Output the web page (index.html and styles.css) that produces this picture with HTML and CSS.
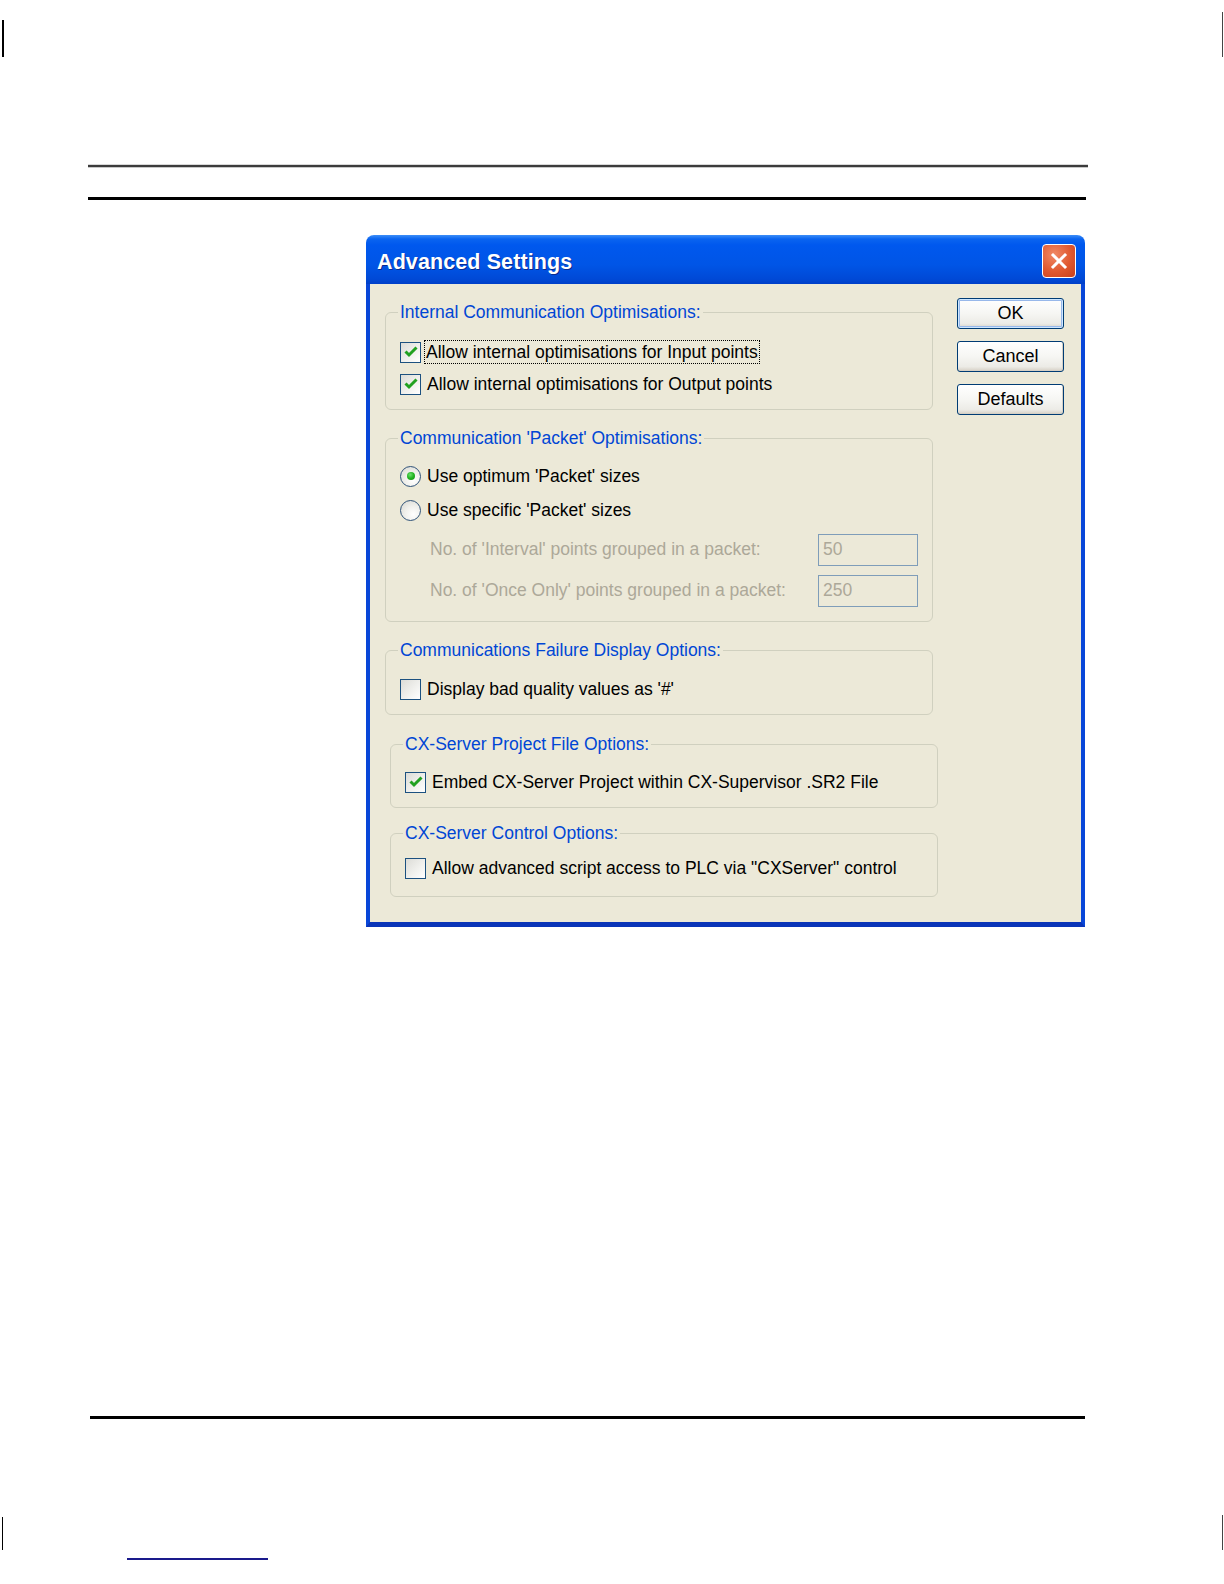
FILE: index.html
```html
<!DOCTYPE html>
<html>
<head>
<meta charset="utf-8">
<title>Advanced Settings</title>
<link rel="stylesheet" href="styles.css">
</head>
<body>
<div class="page">
  <div class="marks marks-top">
    <span class="mark mark-tl"></span>
    <span class="mark mark-tr"></span>
  </div>
  <div class="rule-thin"></div>
  <div class="rule-thick"></div>

  <div class="dialog">
    <div class="titlebar">
      <span class="title">Advanced Settings</span>
      <span class="close">
        <svg width="20" height="20" viewBox="0 0 20 20"><path d="M4 4 L16 16 M16 4 L4 16" stroke="#fff" stroke-width="3" stroke-linecap="square" fill="none"/></svg>
      </span>
    </div>
    <div class="body">
      <div class="groups">
        <fieldset class="group g1">
          <legend>Internal Communication Optimisations:</legend>
          <div class="row"><span class="check on"><svg width="18" height="18" viewBox="0 0 18 18"><path d="M3.5 8.5 L7 12 L14.5 4.5" stroke="#21a121" stroke-width="3" fill="none"/></svg></span><span class="label focus">Allow internal optimisations for Input points</span></div>
          <div class="row"><span class="check on"><svg width="18" height="18" viewBox="0 0 18 18"><path d="M3.5 8.5 L7 12 L14.5 4.5" stroke="#21a121" stroke-width="3" fill="none"/></svg></span><span class="label">Allow internal optimisations for Output points</span></div>
        </fieldset>

        <fieldset class="group g2">
          <legend>Communication 'Packet' Optimisations:</legend>
          <div class="row rrow"><span class="radio on"><span class="dot"></span></span><span class="label">Use optimum 'Packet' sizes</span></div>
          <div class="row rrow"><span class="radio"></span><span class="label">Use specific 'Packet' sizes</span></div>
          <div class="field first"><span class="flabel">No. of 'Interval' points grouped in a packet:</span><span class="input">50</span></div>
          <div class="field"><span class="flabel">No. of 'Once Only' points grouped in a packet:</span><span class="input">250</span></div>
        </fieldset>

        <fieldset class="group g3">
          <legend>Communications Failure Display Options:</legend>
          <div class="row"><span class="check"></span><span class="label">Display bad quality values as '#'</span></div>
        </fieldset>

        <fieldset class="group g4 shifted">
          <legend>CX-Server Project File Options:</legend>
          <div class="row"><span class="check on"><svg width="18" height="18" viewBox="0 0 18 18"><path d="M3.5 8.5 L7 12 L14.5 4.5" stroke="#21a121" stroke-width="3" fill="none"/></svg></span><span class="label">Embed CX-Server Project within CX-Supervisor .SR2 File</span></div>
        </fieldset>

        <fieldset class="group g5 shifted">
          <legend>CX-Server Control Options:</legend>
          <div class="row"><span class="check"></span><span class="label">Allow advanced script access to PLC via "CXServer" control</span></div>
        </fieldset>
      </div>
      <div class="buttons">
        <button class="btn default">OK</button>
        <button class="btn">Cancel</button>
        <button class="btn">Defaults</button>
      </div>
    </div>
  </div>

  <div class="rule-bottom"></div>
  <div class="marks marks-bottom">
    <span class="mark mark-bl"></span>
    <span class="mark mark-br"></span>
  </div>
  <div class="link-line"></div>
</div>
</body>
</html>
```

FILE: styles.css
```css
html, body {
  margin: 0;
  padding: 0;
  background: #ffffff;
}

.page {
  font-family: "Liberation Sans", Arial, sans-serif;
  padding-bottom: 4px;
}

.marks {
  display: flex;
  justify-content: space-between;
  align-items: flex-end;
  padding: 0 1px 0 2px;
}

.marks-top { height: 57px; }

.mark {
  display: block;
  width: 2px;
  background: #000;
}

.mark-tl { height: 37px; }
.mark-tr { height: 45px; width: 1px; background: #444; }

.rule-thin {
  margin: 108px 0 0 88px;
  width: 1000px;
  height: 2px;
  background: #3c3c3c;
  box-shadow: 0 1px 0 #c8c8c8, 0 -1px 0 #d8d8d8;
}

.rule-thick {
  margin: 30px 0 0 88px;
  width: 998px;
  height: 3px;
  background: #000;
}

/* Dialog */
.dialog {
  margin: 35px 0 0 366px;
  width: 719px;
  display: flex;
  flex-direction: column;
}

.titlebar {
  height: 49px;
  border-radius: 8px 8px 0 0;
  background: linear-gradient(to bottom, #3d8ef8 0px, #0a64f0 4px, #0058ee 10px, #0055e6 30px, #0049d6 44px, #003fc8 49px);
  display: flex;
  align-items: center;
  justify-content: space-between;
  padding: 0 9px 0 11px;
}

.title {
  color: #ffffff;
  font-family: "Liberation Sans", Arial, sans-serif;
  font-weight: bold;
  font-size: 21.5px;
  letter-spacing: 0.1px;
  text-shadow: 1px 1px 0 #0a2a8f;
  margin-top: 6px;
}

.close {
  width: 32px;
  height: 32px;
  border: 1px solid #ffffff;
  border-radius: 4px;
  background: radial-gradient(circle at 35% 30%, #f08a66 0%, #e0582f 55%, #c8401c 100%);
  display: flex;
  align-items: center;
  justify-content: center;
  margin-top: 2px;
}

.body {
  background: #ece9d8;
  border-left: 4px solid #0846d8;
  border-right: 4px solid #0846d8;
  border-bottom: 5px solid #0a35b8;
  display: flex;
  align-items: flex-start;
  padding: 14px 17px 0 15px;
  height: 624px;
}

.groups {
  width: 553px;
  padding-top: 3px;
  display: flex;
  flex-direction: column;
}

.group {
  margin: 0;
  width: 548px;
  box-sizing: border-box;
  border: 1px solid #d0d0bf;
  border-radius: 6px;
  padding: 0 10px 0 14px;
  min-width: 0;
}

.group legend {
  color: #0046d5;
  font-size: 17.5px;
  line-height: 22px;
  padding: 0 2px;
  margin-left: -2px;
}

.group.shifted { margin-left: 5px; }

.g1 { padding-top: 13px; padding-bottom: 9px; }
.g2 { margin-top: 17px; padding-top: 10px; padding-bottom: 10px; }
.g3 { margin-top: 17px; padding-top: 12px; padding-bottom: 9px; }
.g4 { margin-top: 18px; padding-top: 11px; padding-bottom: 9px; }
.g5 { margin-top: 14px; padding-top: 8px; padding-bottom: 12px; }

.row {
  height: 32px;
  display: flex;
  align-items: center;
  color: #000;
  font-size: 17.5px;
}

.rrow { height: 34px; }

.check {
  width: 19px;
  height: 19px;
  border: 1px solid #1c5180;
  background: linear-gradient(135deg, #dcdcd7 0%, #f2f2ef 60%, #ffffff 100%);
  flex: none;
  margin-right: 6px;
  display: flex;
  align-items: center;
  justify-content: center;
}

.radio {
  width: 19px;
  height: 19px;
  border: 1px solid #2f5279;
  border-radius: 50%;
  background: radial-gradient(circle at 65% 70%, #ffffff 0%, #f0f0ec 45%, #d6d6cf 100%);
  flex: none;
  margin-right: 6px;
  display: flex;
  align-items: center;
  justify-content: center;
}

.dot {
  width: 8px;
  height: 8px;
  border-radius: 50%;
  background: radial-gradient(circle at 40% 35%, #6fe06f 0%, #21b421 50%, #138a13 100%);
}

.label {
  line-height: 22px;
  white-space: nowrap;
}

.label.focus {
  outline: 1px dotted #000;
  outline-offset: 0;
  padding: 0 1px;
  margin-left: -2px;
}

.field {
  height: 41px;
  display: flex;
  align-items: center;
  padding-left: 30px;
  font-size: 17.5px;
}

.field.first { margin-top: 2px; }

.flabel {
  color: #aca899;
  width: 388px;
  white-space: nowrap;
}

.input {
  width: 94px;
  height: 30px;
  border: 1px solid #7f9db9;
  background: #ece9d8;
  color: #aca899;
  padding-left: 4px;
  display: flex;
  align-items: center;
  box-sizing: content-box;
}

/* Buttons */
.buttons {
  margin-left: 19px;
  width: 107px;
  display: flex;
  flex-direction: column;
  gap: 12px;
}

.btn {
  width: 107px;
  height: 31px;
  border: 1px solid #003c74;
  border-radius: 3px;
  background: linear-gradient(to bottom, #ffffff 0%, #f6f6f3 50%, #ecebe6 85%, #d6d0c5 100%);
  font-family: "Liberation Sans", Arial, sans-serif;
  font-size: 18px;
  color: #000;
  padding: 0;
  box-shadow: inset -1px -1px 0 #d6d0c5;
}

.btn.default {
  box-shadow: inset 0 0 0 1px #cee7ff, inset 0 0 0 2px #98b8ea;
}

.rule-bottom {
  margin: 489px 0 0 90px;
  width: 995px;
  height: 3px;
  background: #000;
}

.marks-bottom {
  margin-top: 96px;
  height: 35px;
}

.mark-bl { height: 33px; width: 1px; }
.mark-br { height: 35px; width: 1px; background: #444; }

.link-line {
  margin: 8px 0 0 127px;
  width: 141px;
  height: 2px;
  background: #1a1a8c;
}
```
